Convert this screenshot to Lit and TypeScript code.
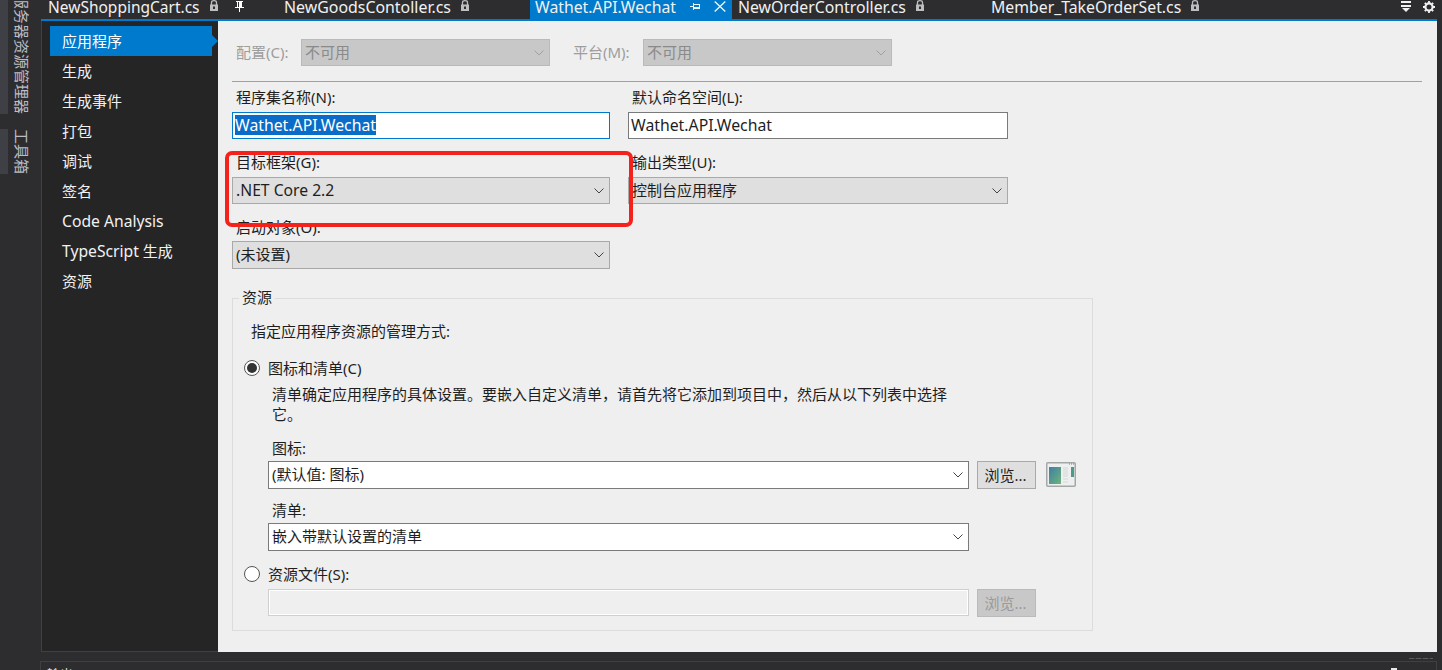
import { LitElement, html, css, svg } from "lit";
import { customElement } from "lit/decorators.js";

const lock = html`<svg class="lock" width="8" height="11" viewBox="0 0 8 11"><path d="M1.5 5V2.5Q1.5 .7 4 .7T6.5 2.5V5" fill="none" stroke="#bdbdbd" stroke-width="1.3"/><rect y="4.5" width="8" height="6.5" fill="#bdbdbd"/><rect x="3" y="6.5" width="2" height="2.5" fill="#2d2d30"/></svg>`;
const pinShape = svg`<path d="M2 0H9V1H8V6H10V7H6V11H5V7H1V6H3V1H2Z" fill="currentColor"/><rect x="4" y="1" width="1" height="5" fill="#2d2d30"/>`;
const chevron = html`<svg class="chev" width="10" height="6" viewBox="0 0 10 6"><path d="M.5.5 5 5 9.5.5" fill="none" stroke="currentColor" stroke-width="1"/></svg>`;

const combo = (text: string, cls = "") => html`<div class="combo ${cls}"><span>${text}</span>${chevron}</div>`;

@customElement("app-root")
export class AppRoot extends LitElement {
  static styles = css`
    :host { display: block; width: 1442px; height: 670px; overflow: hidden; position: relative; }
    * { box-sizing: border-box; }
    .root { display: flex; width: 1442px; height: 670px; background: #2d2d30; overflow: hidden; position: relative;
      font-family: "Noto Sans", "Noto Sans CJK SC", sans-serif; font-size: 15px; color: #1e1e1e; }
    .rail { width: 41px; flex: none; height: 670px; display: flex; flex-direction: column; overflow: hidden; }
    .vtab { display: flex; gap: 6px; justify-content: flex-start; }
    .vtab i { display: block; width: 8px; background: #3f3f46; flex: none; }
    .vtab b { writing-mode: vertical-rl; text-orientation: sideways; font-weight: 400; font-size: 15px; line-height: 15px; color: #bcbcc4; white-space: nowrap; }
    .vt1 { height: 114px; align-items: flex-end; }
    .vt1 i { height: 114px; }
    .vt2 { height: 45px; margin-top: 15px; }
    .vt2 i { height: 45px; }
    .col { flex: 1; min-width: 0; display: flex; flex-direction: column; }
    .tabs { height: 19px; display: flex; align-items: center; color: #f1f1f1; font-size: 15.8px; white-space: nowrap; padding-left: 7px; flex: none; }
    .tab { display: flex; align-items: center; height: 19px; flex: none; }
    .tab span { display: block; line-height: 14px; align-self: flex-start; }
    .lock { margin-left: 10px; margin-top: -8px; flex: none; }
    .pin { color: #fff; flex: none; margin-top: -6px; }
    .t1 { width: 236px; font-size: 15.5px; }
    .t2 { width: 246px; font-size: 15.9px; }
    .active { background: #007acc; width: 202px; padding-left: 5px; }
    .active .pin { margin-left: 14px; }
    .active .x { margin-left: 13px; margin-top: -6px; flex: none; }
    .t3 { width: 253px; margin-left: 6px; }
    .tabtools { margin-left: auto; display: flex; align-items: center; gap: 12px; padding-right: 7px; margin-top: -6px; }
    .body { display: flex; height: 633px; flex: none; border-top: 2px solid #007acc; margin-right: 5px; }
    .side { width: 177px; flex: none; background: #252526; border-left: 1px solid #3f3f46; border-bottom: 1px solid #3f3f46; padding: 5px 0 0 8px; color: #f1f1f1; font-size: 15px; }
    .item { height: 30px; width: 162px; padding-left: 12px; line-height: 30px; position: relative; white-space: nowrap; }
    .item.on { background: #007acc; color: #fff; }
    .item.on::after { content: ""; position: absolute; left: 162px; top: 9px; border-left: 6px solid #007acc; border-top: 6px solid transparent; border-bottom: 6px solid transparent; }
    .lat { font-size: 15.7px; }
    .panel { flex: 1; background: #efefef; padding: 18px 15px 0 14px; min-width: 0; }
    .row1 { display: flex; height: 27px; align-items: center; color: #9d9d9d; }
    .row1 label { width: 69px; padding-left: 4px; white-space: nowrap; padding-bottom: 2px; }
    .row1 .lb2 { width: 70px; margin-left: 23px; padding-left: 0; }
    .combo { height: 27px; border: 1px solid #a9a9a9; background: #dfdfdf; display: flex; align-items: center; justify-content: space-between; padding: 0 3px 0 3px; white-space: nowrap; color: #1e1e1e; }
    .combo span { padding-bottom: 2px; }
    .combo.tall span { padding-bottom: 3px; }
    .combo .chev { margin-right: 2px; color: #444; flex: none; }
    .combo.dis { width: 249px; background: #c8c8c8; border-color: #bababa; color: #8a8a8a; }
    .combo.dis .chev { color: #a0a0a0; }
    .combo.white { background: #fff; border-color: #7a7a7a; }
    .tall { height: 28px; }
    .sep { height: 1px; background: #a0a0a0; margin-top: 15px; }
    .form { display: grid; grid-template-columns: 378px 380px; column-gap: 18px; }
    .form label { display: block; height: 20px; line-height: 18px; padding-left: 4px; white-space: nowrap; }
    .f1 { margin-top: 6px; margin-bottom: 4px; }
    .f2 { margin-top: 14px; margin-bottom: 4px; }
    .f3 { margin-top: 14px; margin-bottom: 3px; }
    .input { height: 27px; background: #fff; border: 1px solid #7a7a7a; padding: 0 2px; line-height: 25px; white-space: nowrap; font-size: 15.8px; }
    .input.focus { border-color: #007acc; }
    .input mark { background: #0a6cc8; color: #fff; display: inline-block; line-height: 20px; }
    .net { font-size: 15.7px; }
    .group { margin-top: 29px; width: 861px; height: 333px; border: 1px solid #dcdcdc; position: relative; padding-left: 35px; }
    .legend { position: absolute; left: 6px; top: -12px; background: #efefef; padding: 0 3px; line-height: 20px; }
    .intro { margin: 22px 0 0 -17px; line-height: 20px; }
    .radio-row { display: flex; align-items: center; height: 20px; margin-left: -24px; gap: 8px; white-space: nowrap; }
    .radio-row span:last-child { padding-bottom: 2px; }
    .r1 { margin-top: 17px; }
    .r2 { margin-top: 13px; margin-bottom: 5px; }
    .radio { width: 16px; height: 16px; border-radius: 50%; border: 1px solid #555; background: #fff; display: flex; align-items: center; justify-content: center; flex: none; }
    .radio i { display: block; width: 10px; height: 10px; border-radius: 50%; background: #333; }
    .para { width: 680px; line-height: 20px; margin: 6px 0 0 4px; }
    .sub { display: block; height: 20px; line-height: 18px; margin-left: 4px; }
    .s1 { margin-top: 15px; margin-bottom: 2px; }
    .s2 { margin-top: 12px; margin-bottom: 2px; }
    .ctl { display: flex; align-items: flex-start; }
    .ctl .combo, .ctl .input { width: 701px; flex: none; }
    .btn { width: 59px; height: 28px; margin-left: 8px; border: 1px solid #a9a9a9; background: #dfdfdf; display: flex; align-items: center; justify-content: center; flex: none; padding: 0 2px 2px 0; }
    .btn.dis { background: #c8c8c8; border-color: #bababa; color: #9a9a9a; }
    .input.off { background: #efefef; border: 1px solid #cfcfcf; box-shadow: inset 0 0 0 1px #fff; }
    .prev { margin-left: 10px; margin-top: 1px; flex: none; }
    .red { position: absolute; left: 225px; top: 151px; width: 408px; height: 76px; border: 4px solid #f4221a; border-radius: 7px; pointer-events: none; }
    .grip { position: absolute; left: 1409px; top: 658px; width: 24px; height: 1px; background: repeating-linear-gradient(90deg, #5a5a5e 0 5px, #3c3c40 5px 7px); }
    .bottom { position: absolute; left: 40px; right: 5px; top: 661px; height: 9px; border-top: 1px solid #3f3f46; border-left: 1px solid #3f3f46; border-right: 1px solid #3f3f46; color: #d8d8d8; font-size: 13px; line-height: 18px; padding: 3px 39px 0 6px; overflow: hidden; display: flex; justify-content: space-between; }
    .bottom i { display: block; width: 6px; height: 4px; margin-top: 3px; background: #e8e8e8; flex: none; }
  `;

  render() {
    return html`<div class="root">
      <div class="rail">
        <div class="vtab vt1"><i></i><b>服务器资源管理器</b></div>
        <div class="vtab vt2"><i></i><b>工具箱</b></div>
      </div>
      <div class="col">
        <div class="tabs">
          <div class="tab t1"><span>NewShoppingCart.cs</span>${lock}<svg class="pin" style="margin-left:16px" width="11" height="11" viewBox="0 0 11 11">${pinShape}</svg></div>
          <div class="tab t2"><span>NewGoodsContoller.cs</span>${lock}</div>
          <div class="tab active"><span>Wathet.API.Wechat</span>
            <svg class="pin" width="11" height="9" viewBox="0 0 11 9"><path d="M0 4H3V5H0ZM3 1H4V8H3ZM4 2H10V3H4ZM4 5H10V7H4ZM9 2H10V7H9Z" fill="#e8f4fc"/></svg>
            <svg class="x" width="12" height="11" viewBox="0 0 12 11"><path d="M.7.5 11.3 10.5M11.3.5.7 10.5" stroke="#e8f4fc" stroke-width="1.4"/></svg>
          </div>
          <div class="tab t3"><span>NewOrderController.cs</span>${lock}</div>
          <div class="tab t4"><span>Member_TakeOrderSet.cs</span>${lock}</div>
          <div class="tabtools">
            <svg width="10" height="11" viewBox="0 0 10 11"><path d="M0 0H10V2H0ZM0 4H10V6H0ZM1 7H9L5 11Z" fill="#f1f1f1"/></svg>
            <svg width="12" height="12" viewBox="0 0 12 12"><circle cx="6" cy="6" r="3.6" fill="none" stroke="#f1f1f1" stroke-width="2.2"/><path d="M6 0V2M6 10V12M0 6H2M10 6H12M1.8 1.8 3 3M9 9 10.2 10.2M10.2 1.8 9 3M3 9 1.8 10.2" stroke="#f1f1f1" stroke-width="1.8"/></svg>
          </div>
        </div>
        <div class="body">
          <div class="side">
            <div class="item on">应用程序</div>
            <div class="item">生成</div>
            <div class="item">生成事件</div>
            <div class="item">打包</div>
            <div class="item">调试</div>
            <div class="item">签名</div>
            <div class="item"><span class="lat">Code Analysis</span></div>
            <div class="item"><span class="lat">TypeScript</span> 生成</div>
            <div class="item">资源</div>
          </div>
          <div class="panel">
            <div class="row1">
              <label>配置(C):</label>${combo("不可用", "dis")}
              <label class="lb2">平台(M):</label>${combo("不可用", "dis")}
            </div>
            <div class="sep"></div>
            <div class="form">
              <div><label class="f1">程序集名称(N):</label><div class="input focus"><mark>Wathet.API.Wechat</mark></div></div>
              <div><label class="f1">默认命名空间(L):</label><div class="input">Wathet.API.Wechat</div></div>
              <div><label class="f2">目标框架(G):</label>${combo(".NET Core 2.2", "net")}</div>
              <div><label class="f2">输出类型(U):</label>${combo("控制台应用程序")}</div>
              <div><label class="f3">启动对象(O):</label>${combo("(未设置)", "tall")}</div>
            </div>
            <div class="group">
              <div class="legend">资源</div>
              <div class="intro">指定应用程序资源的管理方式:</div>
              <div class="radio-row r1"><span class="radio"><i></i></span><span>图标和清单(C)</span></div>
              <div class="para">清单确定应用程序的具体设置。要嵌入自定义清单，请首先将它添加到项目中，然后从以下列表中选择它。</div>
              <label class="sub s1">图标:</label>
              <div class="ctl">
                ${combo("(默认值: 图标)", "white tall")}
                <div class="btn">浏览...</div>
                <svg class="prev" width="30" height="25" viewBox="0 0 30 25">
                  <rect x=".75" y=".75" width="28.5" height="23.5" rx="1" fill="#eef0f0" stroke="#a3a7a7" stroke-width="1.5"/>
                  <defs><linearGradient id="pg" x1="0" y1="0" x2="1" y2="1"><stop offset="0" stop-color="#3f7fa3"/><stop offset="1" stop-color="#6fb37c"/></linearGradient></defs>
                  <rect x="3" y="5" width="12" height="17" fill="url(#pg)"/>
                  <path d="M17 6H22M17 8H22M17 10H22M17 12H22M17 14H22M17 17H22M17 20H22" stroke="#d6d8d8"/>
                  <rect x="25" y="5" width="3" height="10" fill="#4f9a86"/>
                  <path d="M23 2H24M25 2H26M27 2H28" stroke="#7d8080"/>
                </svg>
              </div>
              <label class="sub s2">清单:</label>
              <div class="ctl">${combo("嵌入带默认设置的清单", "white tall")}</div>
              <div class="radio-row r2"><span class="radio"></span><span>资源文件(S):</span></div>
              <div class="ctl"><div class="input off"></div><div class="btn dis">浏览...</div></div>
            </div>
          </div>
        </div>
      </div>
      <div class="red"></div>
      <div class="grip"></div>
      <div class="bottom"><span>输出</span><i></i></div>
    </div>`;
  }
}
